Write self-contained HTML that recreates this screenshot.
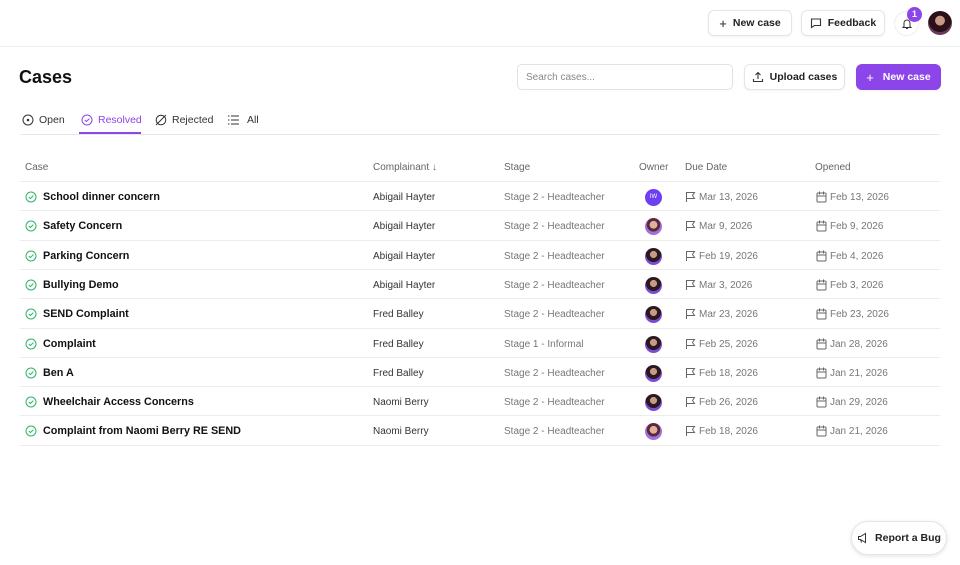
<!DOCTYPE html>
<html><head><meta charset="utf-8"><style>
*{box-sizing:border-box;margin:0;padding:0}
body{width:960px;height:565px;background:#fff;font-family:"Liberation Sans",sans-serif;color:#111;position:relative;overflow:hidden;font-size:10px}
.abs{position:absolute}
.btn{position:absolute;height:26px;border:1px solid #e5e5e5;border-radius:6px;background:#fff;display:flex;align-items:center;justify-content:center;gap:6px;font-size:10.5px;font-weight:bold;color:#222;box-shadow:0 1px 2px rgba(0,0,0,.05)}
svg{display:block}
.row{position:absolute;left:20px;width:920px;height:29px;border-top:1px solid #ececec}
.row span{position:absolute;top:1px;line-height:29px;white-space:nowrap}
.c1{left:23px;font-weight:bold;color:#111;font-size:10.8px}
.c2{left:353px;color:#333}
.c3{left:484px;color:#777}
.c5{left:679px;color:#777}
.c6{left:810px;color:#777}
.ck{position:absolute;left:5px;top:9px}
.fl{position:absolute;left:665px;top:9px}
.cal{position:absolute;left:796px;top:9px}
.av{position:absolute;left:625px;top:7px;width:17px;height:17px;border-radius:50%;background:radial-gradient(circle at 50% 38%,#c89a85 0 25%,#2a1a20 27% 55%,#7b4bd6 57%)}
.av2{background:radial-gradient(circle at 50% 40%,#e0b09a 0 28%,#5a2a3a 30% 50%,#a070e0 52%)}
.th{position:absolute;top:162px;color:#666;font-size:10px}
.tab{position:absolute;top:114px;display:flex;align-items:center;gap:5px;color:#333;font-size:10.5px}
</style></head><body>
<div class="abs" style="left:0;top:46px;width:960px;border-top:1px solid #eee"></div>
<div class="btn" style="left:708px;top:10px;width:84px"><span style="font-weight:normal;font-size:13px">+</span> New case</div>
<div class="btn" style="left:801px;top:10px;width:84px"><svg width="12" height="12" viewBox="0 0 12 12"><path d="M1.5 2h9v6.5h-6l-3 2z" fill="none" stroke="#333" stroke-width="1.1"/></svg>Feedback</div>
<div class="abs" style="left:894px;top:11px;width:25px;height:25px;border:1px solid #eee;border-radius:50%"><svg style="margin:6px" width="12" height="12" viewBox="0 0 12 12"><path d="M3 8.5V5a3 3 0 016 0v3.5l1 1H2zM5 10.5h2" fill="none" stroke="#333" stroke-width="1"/></svg></div>
<div class="abs" style="left:907px;top:7px;width:15px;height:15px;border-radius:50%;background:#8b45e8;color:#fff;font-size:9px;font-weight:bold;text-align:center;line-height:15px">1</div>
<div class="abs" style="left:928px;top:11px;width:24px;height:24px;border-radius:50%;background:radial-gradient(circle at 50% 40%,#c89a85 0 25%,#2a1018 27% 60%,#6a3a5a 62%)"></div>

<div class="abs" style="left:19px;top:67px;font-size:18px;font-weight:bold">Cases</div>
<div class="abs" style="left:517px;top:64px;width:216px;height:26px;border:1px solid #e2e2e2;border-radius:5px;padding:7px 8px;color:#888;font-size:10px">Search cases...</div>
<div class="btn" style="left:744px;top:64px;width:101px;height:26px"><svg width="12" height="12" viewBox="0 0 12 12"><path d="M6 8V1.5M3.5 4L6 1.5 8.5 4M1.5 8v2.5h9V8" fill="none" stroke="#333" stroke-width="1.1"/></svg>Upload cases</div>
<div class="btn" style="left:856px;top:64px;width:85px;height:26px;background:#8b45e8;border-color:#8b45e8;color:#fff"><span style="font-weight:normal;font-size:13px">+</span>&nbsp;New case</div>

<div class="abs" style="left:20px;top:134px;width:920px;border-top:1px solid #e8e8e8"></div>
<div class="abs" style="left:79px;top:132px;width:62px;border-top:2px solid #8b45e8"></div>
<div class="tab" style="left:22px"><svg width="12" height="12" viewBox="0 0 12 12"><circle cx="6" cy="6" r="5" fill="none" stroke="#333"/><circle cx="6" cy="6" r="1.3" fill="#333"/></svg>Open</div>
<div class="tab" style="left:81px;color:#8b45e8"><svg width="12" height="12" viewBox="0 0 12 12"><circle cx="6" cy="6" r="5" fill="none" stroke="#8b45e8"/><path d="M3.8 6l1.6 1.6 3-3" fill="none" stroke="#8b45e8"/></svg>Resolved</div>
<div class="tab" style="left:155px"><svg width="12" height="12" viewBox="0 0 12 12"><circle cx="6" cy="6" r="4.8" fill="none" stroke="#333"/><path d="M1 11L11 1" stroke="#333"/></svg>Rejected</div>
<div class="tab" style="left:228px;gap:8px"><svg width="11" height="10" viewBox="0 0 11 10"><path d="M0 1h1.5M0 5h1.5M0 9h1.5M3 1h8M3 5h8M3 9h8" stroke="#333"/></svg>All</div>

<div class="th" style="left:25px">Case</div>
<div class="th" style="left:373px">Complainant ↓</div>
<div class="th" style="left:504px">Stage</div>
<div class="th" style="left:639px">Owner</div>
<div class="th" style="left:685px">Due Date</div>
<div class="th" style="left:815px">Opened</div>

<div id="rows"></div>
<script>
var d=[["School dinner concern","Abigail Hayter","Stage 2 - Headteacher","Mar 13, 2026","Feb 13, 2026",0],
["Safety Concern","Abigail Hayter","Stage 2 - Headteacher","Mar 9, 2026","Feb 9, 2026",2],
["Parking Concern","Abigail Hayter","Stage 2 - Headteacher","Feb 19, 2026","Feb 4, 2026",1],
["Bullying Demo","Abigail Hayter","Stage 2 - Headteacher","Mar 3, 2026","Feb 3, 2026",1],
["SEND Complaint","Fred Balley","Stage 2 - Headteacher","Mar 23, 2026","Feb 23, 2026",1],
["Complaint","Fred Balley","Stage 1 - Informal","Feb 25, 2026","Jan 28, 2026",1],
["Ben A","Fred Balley","Stage 2 - Headteacher","Feb 18, 2026","Jan 21, 2026",1],
["Wheelchair Access Concerns","Naomi Berry","Stage 2 - Headteacher","Feb 26, 2026","Jan 29, 2026",1],
["Complaint from Naomi Berry RE SEND","Naomi Berry","Stage 2 - Headteacher","Feb 18, 2026","Jan 21, 2026",2]];
var h="";
d.forEach(function(r,i){var y=181+i*29.3;
var av=r[5]==0?'<div class="av" style="background:#6d3ff0;color:#fff;font-size:6px;text-align:center;line-height:17px">IW</div>':'<div class="av'+(r[5]==2?' av2':'')+'"></div>';
h+='<div class="row" style="top:'+y+'px"><svg class="ck" width="12" height="12" viewBox="0 0 12 12"><circle cx="6" cy="6" r="5" fill="none" stroke="#2fb36a"/><path d="M3.8 6l1.6 1.6 3-3" fill="none" stroke="#2fb36a"/></svg><span class="c1">'+r[0]+'</span><span class="c2">'+r[1]+'</span><span class="c3">'+r[2]+'</span>'+av+'<svg class="fl" width="11" height="12" viewBox="0 0 11 12"><path d="M1.5 11V1.5h8l-2 3 2 3h-8" fill="none" stroke="#666"/></svg><span class="c5">'+r[3]+'</span><svg class="cal" width="11" height="12" viewBox="0 0 11 12"><rect x="1" y="2" width="9" height="9" rx="1" fill="none" stroke="#666"/><path d="M1 5h9M3.5 .5v3M7.5 .5v3" stroke="#666"/></svg><span class="c6">'+r[4]+'</span></div>';});
h+='<div class="row" style="top:'+(181+9*29.3)+'px;height:1px"></div>';
document.getElementById("rows").innerHTML=h;
</script>
<div class="btn" style="left:851px;top:521px;width:96px;height:34px;border-radius:17px;box-shadow:0 1px 4px rgba(0,0,0,.12)"><svg width="12" height="12" viewBox="0 0 12 12"><path d="M1.5 4.5h2l5-3v9l-5-3h-2zM3.5 7.5l1 3" fill="none" stroke="#333"/></svg>Report a Bug</div>
</body></html>
